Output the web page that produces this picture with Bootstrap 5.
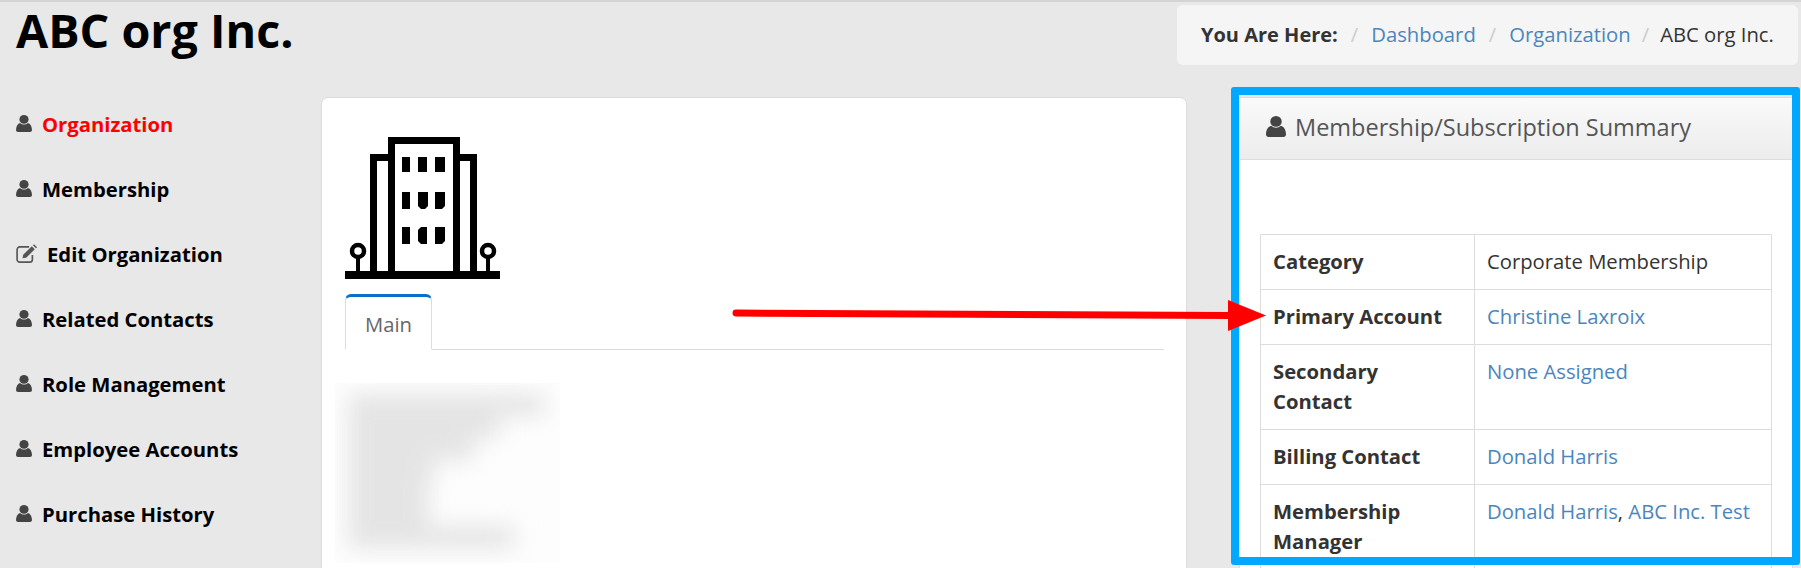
<!DOCTYPE html>
<html>
<head>
    <title>ABC org Inc.</title>
    <link rel="stylesheet" href="https://cdn.jsdelivr.net/npm/bootstrap@5.3.0/dist/css/bootstrap.min.css">
    <style>
        html, body { height: 100%; overflow: hidden; }
        body { background: #e8e8e8; border-top: 2px solid #d4d4d4; font-family: "Open Sans", "Liberation Sans", sans-serif; font-size: 20.250px; line-height: 30px; color: #333; position: relative; }
        a { color: #4a86bd; text-decoration: none; }
        .page-head { height: 85px; padding-left: 16px; padding-right: 3px; }
        .page-title { font-size: 46.700px; font-weight: 700; color: #000; line-height: 56px; margin: 0; }
        .crumbs { background: #f5f5f5; border-radius: 6px; height: 60px; width: 621px; margin: 3px 0 0; padding: 14px 24px; --bs-breadcrumb-item-padding-x: 13px; --bs-breadcrumb-divider-color: #ccc; flex-wrap: nowrap; white-space: nowrap; }
        .crumbs .breadcrumb-item { color: #333; }
        .crumbs strong { font-size: 20px; }
        .crumbs .crumb-end { padding-left: 11px; }
        .crumbs .crumb-end::before { padding-right: 11px; }
        .side-col { width: 321px; padding-left: 16px; margin-top: -5px; flex: none; }
        .side-link { height: 65px; display: flex; align-items: center; gap: 10px; color: #000; font-weight: 700; font-size: 20.250px; padding-bottom: 2px; }
        .side-link.is-on { color: #f00; }
        .side-link svg { flex: none; }
        .side-link.has-edit { gap: 7px; }
        .main-card { width: 866px; height: 520px; flex: none; border: 1px solid #dcdcdc; border-radius: 7px; background: #fff; padding: 39px 22px 0 23px; }
        .tower { display: block; margin-bottom: 15px; }
        .tab-bar { border-bottom: 1px solid #ddd; }
        .tab-bar .nav-link.active { color: #666; padding: 12px 19px 9px; height: 56px; border: 1px solid #ddd; border-top: 3px solid #0a6fc9; border-bottom-color: #fff; border-radius: 6px 6px 0 0; background: #fff; }
        .blur-box { width: 225px; height: 180px; margin: 33px 0 0 -10px; overflow: hidden; background: #fdfdfd; }
        .blur-bars { filter: blur(11px); padding: 12px 0 0 14px; }
        .blur-line { height: 20px; margin-bottom: 2px; background: #e2e2e2; }
        .sum-panel { width: 554px; height: 520px; margin-left: 52px; flex: none; border: 1px solid #dcdcdc; border-radius: 0; }
        .sum-head { height: 62px; padding: 10px 26px 14px; background: linear-gradient(#fafafa, #ececec); border-bottom: 1px solid #ddd; border-radius: 0; font-size: 23.500px; color: #555; display: flex; align-items: center; gap: 9px; }
        .sum-body { padding: 74px 20px 0; }
        .sum-table { margin: 0; border-color: #ddd; table-layout: fixed; width: 512px; color: #333; }
        .sum-table td, .sum-table th { padding: 11px 12px 13px; font-size: 20.250px; line-height: 30px; color: #333; }
        .sum-table a { color: #4a86bd; }
        .sum-table th { width: 214px; font-weight: 700; padding-right: 26px; }
        .mark-frame { position: absolute; left: 1231px; top: 85px; width: 569px; height: 478px; border: 8px solid #00a8ff; border-radius: 3px; pointer-events: none; }
        .mark-arrow { position: absolute; left: 0; top: -2px; pointer-events: none; }
    </style>
</head>
<body>
    <div class="page-head d-flex justify-content-between align-items-start">
        <h1 class="page-title">ABC org Inc.</h1>
        <ol class="breadcrumb crumbs">
            <li class="breadcrumb-item"><strong>You Are Here:</strong></li>
            <li class="breadcrumb-item"><a href="#">Dashboard</a></li>
            <li class="breadcrumb-item"><a href="#">Organization</a></li>
            <li class="breadcrumb-item crumb-end active">ABC org Inc.</li>
        </ol>
    </div>

    <div class="d-flex align-items-start" style="margin-top:10px">
        <!-- left menu -->
        <div class="side-col">
            <a class="side-link is-on" href="#"><svg width="16" height="17" viewBox="1 .5 14 15.500" preserveAspectRatio="none"><use href="#ico-user"/></svg>Organization</a>
            <a class="side-link" href="#"><svg width="16" height="17" viewBox="1 .5 14 15.500" preserveAspectRatio="none"><use href="#ico-user"/></svg>Membership</a>
            <a class="side-link has-edit" href="#"><svg width="24" height="20" viewBox="0 0 22 18"><use href="#ico-edit"/></svg>Edit Organization</a>
            <a class="side-link" href="#"><svg width="16" height="17" viewBox="1 .5 14 15.500" preserveAspectRatio="none"><use href="#ico-user"/></svg>Related Contacts</a>
            <a class="side-link" href="#"><svg width="16" height="17" viewBox="1 .5 14 15.500" preserveAspectRatio="none"><use href="#ico-user"/></svg>Role Management</a>
            <a class="side-link" href="#"><svg width="16" height="17" viewBox="1 .5 14 15.500" preserveAspectRatio="none"><use href="#ico-user"/></svg>Employee Accounts</a>
            <a class="side-link" href="#"><svg width="16" height="17" viewBox="1 .5 14 15.500" preserveAspectRatio="none"><use href="#ico-user"/></svg>Purchase History</a>
        </div>

        <!-- middle card -->
        <div class="main-card">
            <svg class="tower" width="155" height="142" viewBox="0 0 155 142" fill="#000">
                <rect x="0" y="134" width="155" height="8"/>
                <path fill-rule="evenodd" d="M43 0h72v17h17v118h-7V24h-10v111h-7V7H50v128h-7V24H32v111h-7V17h18z"/>
                <rect x="57" y="20" width="8" height="15"/><rect x="73" y="20" width="9" height="15"/><rect x="90" y="20" width="10" height="15"/>
                <rect x="57" y="55" width="8" height="17"/><path d="M73 55h10v14l-3 3h-4l-3-3z"/><path d="M90 55h10v14l-3 3h-7z"/>
                <rect x="57" y="90" width="8" height="17"/><path d="M76 90h6v17h-6l-3-3V93z"/><path d="M90 90h10v14l-3 3h-7z"/>
                <circle cx="13" cy="114" r="6" fill="none" stroke="#000" stroke-width="4.500"/><rect x="11" y="119" width="4" height="16"/>
                <circle cx="143" cy="114" r="6" fill="none" stroke="#000" stroke-width="4.500"/><rect x="141" y="119" width="4" height="16"/>
            </svg>
            <ul class="nav nav-tabs tab-bar">
                <li class="nav-item"><a class="nav-link active" href="#">Main</a></li>
            </ul>
            <div class="blur-box">
                <div class="blur-bars">
                    <div class="blur-line" style="width:195px"></div>
                    <div class="blur-line" style="width:150px"></div>
                    <div class="blur-line" style="width:125px"></div>
                    <div class="blur-line" style="width:85px"></div>
                    <div class="blur-line" style="width:80px"></div>
                    <div class="blur-line" style="width:80px"></div>
                    <div class="blur-line" style="width:165px"></div>
                </div>
            </div>
        </div>

        <!-- summary -->
        <div class="card sum-panel">
            <div class="card-header sum-head"><svg width="20" height="21" viewBox="1 .5 14 15.500" preserveAspectRatio="none"><use href="#ico-user"/></svg>Membership/Subscription Summary</div>
            <div class="sum-body">
                <table class="table table-bordered sum-table">
                    <tbody>
                        <tr><th>Category</th><td>Corporate Membership</td></tr>
                        <tr><th>Primary Account</th><td><a href="#">Christine Laxroix</a></td></tr>
                        <tr><th>Secondary Contact</th><td><a href="#">None Assigned</a></td></tr>
                        <tr><th>Billing Contact</th><td><a href="#">Donald Harris</a></td></tr>
                        <tr><th>Membership Manager</th><td><a href="#">Donald Harris</a>, <a href="#">ABC Inc. Test</a></td></tr>
                    </tbody>
                </table>
            </div>
        </div>
    </div>

    <!-- annotations drawn over the page -->
    <div class="mark-frame"></div>
    <svg class="mark-arrow" width="1801" height="568" viewBox="0 0 1801 568">
        <path d="M736 313 L1232 315.500" stroke="#f00" stroke-width="7" stroke-linecap="round" fill="none"/>
        <path d="M1228 300 L1266 315.500 L1228 331 Z" fill="#f00"/>
    </svg>

    <svg width="0" height="0" class="position-absolute">
        <defs>
            <g id="ico-user" fill="#444">
                <circle cx="8" cy="4.500" r="4"/>
                <path d="M1 14.200C1 10.500 2.600 8.300 4.600 7.700 5.600 8.600 6.700 9.100 8 9.100s2.400-.5 3.400-1.400c2 .6 3.600 2.800 3.600 6.500 0 1.100-.8 1.800-1.800 1.800H2.800C1.800 16 1 15.300 1 14.200z"/>
            </g>
            <g id="ico-edit">
                <path d="M15 10v4a2.500 2.500 0 0 1-2.500 2.500h-9A2.500 2.500 0 0 1 1 14V5a2.500 2.500 0 0 1 2.500-2.500H12" fill="none" stroke="#555" stroke-width="1.500"/>
                <path d="M6 13l.6-3.200L14.500 2l2.700 2.700-7.900 7.800zM15.500 1l1-1 2.800 2.800-1 1z" fill="#555"/>
            </g>
        </defs>
    </svg>

    <script src="https://cdn.jsdelivr.net/npm/bootstrap@5.3.0/dist/js/bootstrap.bundle.min.js"></script>
</body>
</html>
